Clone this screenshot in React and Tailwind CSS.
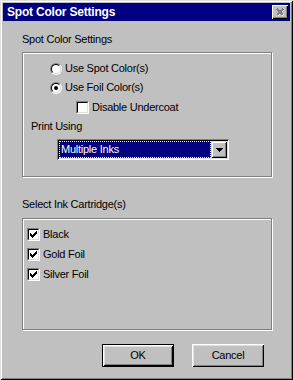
const font = { fontFamily: '"Liberation Sans", Arial, sans-serif' };

function CheckMark() {
  // 7x7 Win95-style check
  return (
    <svg width="7" height="7" viewBox="0 0 7 7" shapeRendering="crispEdges">
      <path
        d="M6 0h1v1h-1z M5 1h2v1h-2z M0 2h1v1h-1z M4 2h3v1h-3z M0 3h2v1h-2z M3 3h3v1h-3z M0 4h5v1h-5z M1 5h3v1h-3z M2 6h1v1h-1z"
        fill="#000"
      />
    </svg>
  );
}

function CheckBox({ checked }) {
  return (
    <div className="w-[13px] h-[13px] border border-t-[#808080] border-l-[#808080] border-r-white border-b-white shrink-0">
      <div className="w-full h-full border border-t-black border-l-black border-r-[#dfdfdf] border-b-[#dfdfdf] bg-white flex items-center justify-center">
        {checked && <CheckMark />}
      </div>
    </div>
  );
}

function Radio({ checked }) {
  return (
    <div className="w-[12px] h-[12px] rounded-full border border-t-[#808080] border-l-[#808080] border-r-white border-b-white shrink-0">
      <div className="w-full h-full rounded-full border border-t-black border-l-black border-r-[#dfdfdf] border-b-[#dfdfdf] bg-white flex items-center justify-center">
        {checked && <div className="w-[4px] h-[4px] rounded-full bg-black" />}
      </div>
    </div>
  );
}

function Row({ children, label }) {
  return (
    <div className="flex items-center gap-[3px] h-[13px] text-[11px] leading-[13px] tracking-[-0.25px] text-black">
      {children}
      <span>{label}</span>
    </div>
  );
}

function Group({ className = '', children }) {
  return (
    <div
      className={`w-[250px] border border-[#808080] shadow-[inset_1px_1px_0_#fff,1px_1px_0_#fff] ${className}`}
    >
      {children}
    </div>
  );
}

function Button({ label, isDefault }) {
  const inner = (
    <div className="w-full h-full flex items-center justify-center text-[11px] tracking-[-0.25px] text-black shadow-[inset_1px_1px_0_#fff,inset_-1px_-1px_0_#000,inset_2px_2px_0_#dfdfdf,inset_-2px_-2px_0_#808080]">
      {label}
    </div>
  );
  return isDefault ? (
    <div className="w-[72px] h-[23px] border border-black">{inner}</div>
  ) : (
    <div className="w-[72px] h-[23px]">{inner}</div>
  );
}

export default function App() {
  return (
    <div
      style={font}
      className="w-[293px] h-[380px] bg-[#c0c0c0] flex flex-col shadow-[inset_1px_1px_0_#dfdfdf,inset_-1px_-1px_0_#000,inset_2px_2px_0_#fff,inset_-2px_-2px_0_#808080] select-none"
    >
      {/* title bar */}
      <div className="mx-[3px] mt-[3px] h-[18px] bg-[#000080] flex items-center justify-between pl-[4px] pr-[2px]">
        <span className="text-white font-bold text-[12px] tracking-[-0.2px]">Spot Color Settings</span>
        <div className="w-[16px] h-[14px] bg-[#c0c0c0] flex items-center justify-center shadow-[inset_1px_1px_0_#fff,inset_-1px_-1px_0_#000,inset_-2px_-2px_0_#808080]">
          <svg width="9" height="8" viewBox="0 0 9 8" shapeRendering="crispEdges">
            <path d="M1.5 1.5l6 6M7.5 1.5l-6 6" stroke="#fff" strokeWidth="1.6" />
            <path d="M1 1l6 6M7 1l-6 6" stroke="#808080" strokeWidth="1.6" />
          </svg>
        </div>
      </div>

      <div className="pl-[22px] flex flex-col">
        <div className="mt-[12px] h-[13px] text-[11px] leading-[13px] tracking-[-0.25px] text-black">
          Spot Color Settings
        </div>

        <Group className="mt-[6px] h-[125px] flex flex-col pt-[9px]">
          <div className="pl-[27px]">
            <Row label="Use Spot Color(s)">
              <Radio checked={false} />
            </Row>
          </div>
          <div className="pl-[27px] mt-[6px]">
            <Row label="Use Foil Color(s)">
              <Radio checked />
            </Row>
          </div>
          <div className="pl-[53px] mt-[7px]">
            <Row label="Disable Undercoat">
              <CheckBox checked={false} />
            </Row>
          </div>
          <div className="pl-[8px] mt-[6px] h-[13px] text-[11px] leading-[13px] tracking-[-0.25px] text-black">
            Print Using
          </div>
          {/* dropdown */}
          <div className="ml-[34px] mt-[6px] w-[172px] h-[21px] shadow-[inset_1px_1px_0_#808080,inset_-1px_-1px_0_#fff,inset_2px_2px_0_#000,inset_-2px_-2px_0_#dfdfdf] bg-white p-[2px] flex">
            <div className="flex-1 bg-[#000080] border border-dotted border-[#ffff80] flex items-center pl-[1px] text-white text-[11px] tracking-[-0.25px]">
              Multiple Inks
            </div>
            <div className="w-[16px] h-full bg-[#c0c0c0] flex items-center justify-center shadow-[inset_1px_1px_0_#dfdfdf,inset_-1px_-1px_0_#000,inset_2px_2px_0_#fff,inset_-2px_-2px_0_#808080]">
              <svg width="7" height="4" viewBox="0 0 7 4" shapeRendering="crispEdges">
                <path d="M0 0h7v1h-7z M1 1h5v1h-5z M2 2h3v1h-3z M3 3h1v1h-1z" fill="#000" />
              </svg>
            </div>
          </div>
        </Group>

        <div className="mt-[21px] h-[13px] text-[11px] leading-[13px] tracking-[-0.25px] text-black">
          Select Ink Cartridge(s)
        </div>

        <Group className="mt-[7px] h-[112px] flex flex-col gap-[7px] pt-[9px] pl-[4px]">
          <Row label="Black">
            <CheckBox checked />
          </Row>
          <Row label="Gold Foil">
            <CheckBox checked />
          </Row>
          <Row label="Silver Foil">
            <CheckBox checked />
          </Row>
        </Group>

        <div className="mt-[14px] flex gap-[18px] pl-[80px]">
          <Button label="OK" isDefault />
          <Button label="Cancel" />
        </div>
      </div>
    </div>
  );
}
